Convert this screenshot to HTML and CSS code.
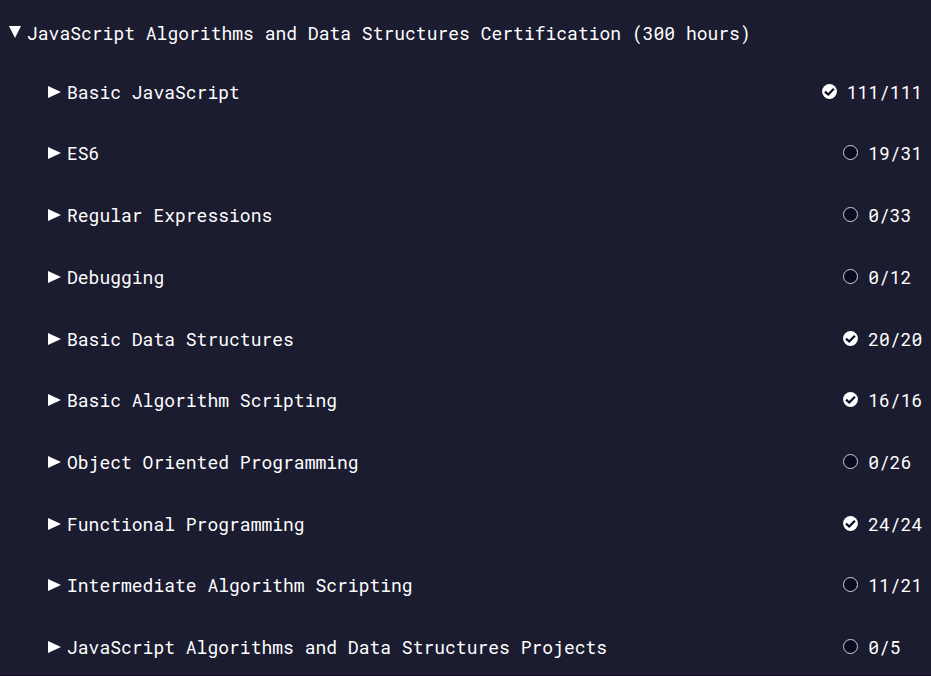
FILE: index.html
```
<!DOCTYPE html>
<html lang="en">
<head>
<meta charset="utf-8">
<title>JavaScript Algorithms and Data Structures</title>
<link rel="stylesheet" href="styles.css">
</head>
<body>
<svg class="defs" aria-hidden="true">
  <symbol id="down" viewBox="0 0 12 12"><path d="M0 0H12L6 12Z" fill="#fff"/></symbol>
  <symbol id="right" viewBox="0 0 13 12"><path d="M0 0L13 6L0 12Z" fill="#fff"/></symbol>
  <symbol id="done" viewBox="0 0 15 15"><circle cx="7.5" cy="7.5" r="7.4" fill="#fff"/><path d="M3 7.6L6.2 10.5L11.9 4.8" fill="none" stroke="#0a0a23" stroke-width="2.2"/></symbol>
  <symbol id="open" viewBox="0 0 15 15"><circle cx="7.5" cy="7.5" r="7" fill="#0a0a23" stroke="#d0d0d5"/></symbol>
</svg>
<main class="block">
  <h1 class="heading"><svg class="down"><use href="#down"/></svg><span>JavaScript Algorithms and Data Structures Certification (300 hours)</span></h1>
  <ul class="list">
    <li class="row"><svg class="right"><use href="#right"/></svg><span class="name">Basic JavaScript</span><svg class="status"><use href="#done"/></svg><span class="count">111/111</span></li>
    <li class="row"><svg class="right"><use href="#right"/></svg><span class="name">ES6</span><svg class="status"><use href="#open"/></svg><span class="count">19/31</span></li>
    <li class="row"><svg class="right"><use href="#right"/></svg><span class="name">Regular Expressions</span><svg class="status"><use href="#open"/></svg><span class="count">0/33</span></li>
    <li class="row"><svg class="right"><use href="#right"/></svg><span class="name">Debugging</span><svg class="status"><use href="#open"/></svg><span class="count">0/12</span></li>
    <li class="row"><svg class="right"><use href="#right"/></svg><span class="name">Basic Data Structures</span><svg class="status"><use href="#done"/></svg><span class="count">20/20</span></li>
    <li class="row"><svg class="right"><use href="#right"/></svg><span class="name">Basic Algorithm Scripting</span><svg class="status"><use href="#done"/></svg><span class="count">16/16</span></li>
    <li class="row"><svg class="right"><use href="#right"/></svg><span class="name">Object Oriented Programming</span><svg class="status"><use href="#open"/></svg><span class="count">0/26</span></li>
    <li class="row"><svg class="right"><use href="#right"/></svg><span class="name">Functional Programming</span><svg class="status"><use href="#done"/></svg><span class="count">24/24</span></li>
    <li class="row"><svg class="right"><use href="#right"/></svg><span class="name">Intermediate Algorithm Scripting</span><svg class="status"><use href="#open"/></svg><span class="count">11/21</span></li>
    <li class="row"><svg class="right"><use href="#right"/></svg><span class="name">JavaScript Algorithms and Data Structures Projects</span><svg class="status"><use href="#open"/></svg><span class="count">0/5</span></li>
  </ul>
</main>
</body>
</html>
```
FILE: styles.css
```
* { box-sizing: border-box; }
body {
  margin: 0;
  background: #1c1c31;
  color: #fff;
  font: 400 18px/24px "Roboto Mono", "Liberation Mono", monospace;
}
.defs { display: none; }
.block {
  height: 676px;
  overflow: hidden;
  border-bottom: 1px solid #130f28;
}
.heading {
  display: flex;
  margin: 0;
  padding: 21px 0 0 9px;
  height: 61.77px;
  font: inherit;
  white-space: pre;
}
.down { width: 12px; height: 12px; margin: 5px 6px 0 0; flex: none; }
.list { list-style: none; margin: 0; padding: 0 8.75px 0 48px; }
.row { display: flex; height: 61.71px; padding-top: 18px; }
.right { width: 13px; height: 12px; margin: 6px 6px 0 0; flex: none; }
.name { flex: 1; }
.status { width: 15px; height: 15px; margin: 4px 10px 0 0; flex: none; }
.count { min-width: 54px; }
```
